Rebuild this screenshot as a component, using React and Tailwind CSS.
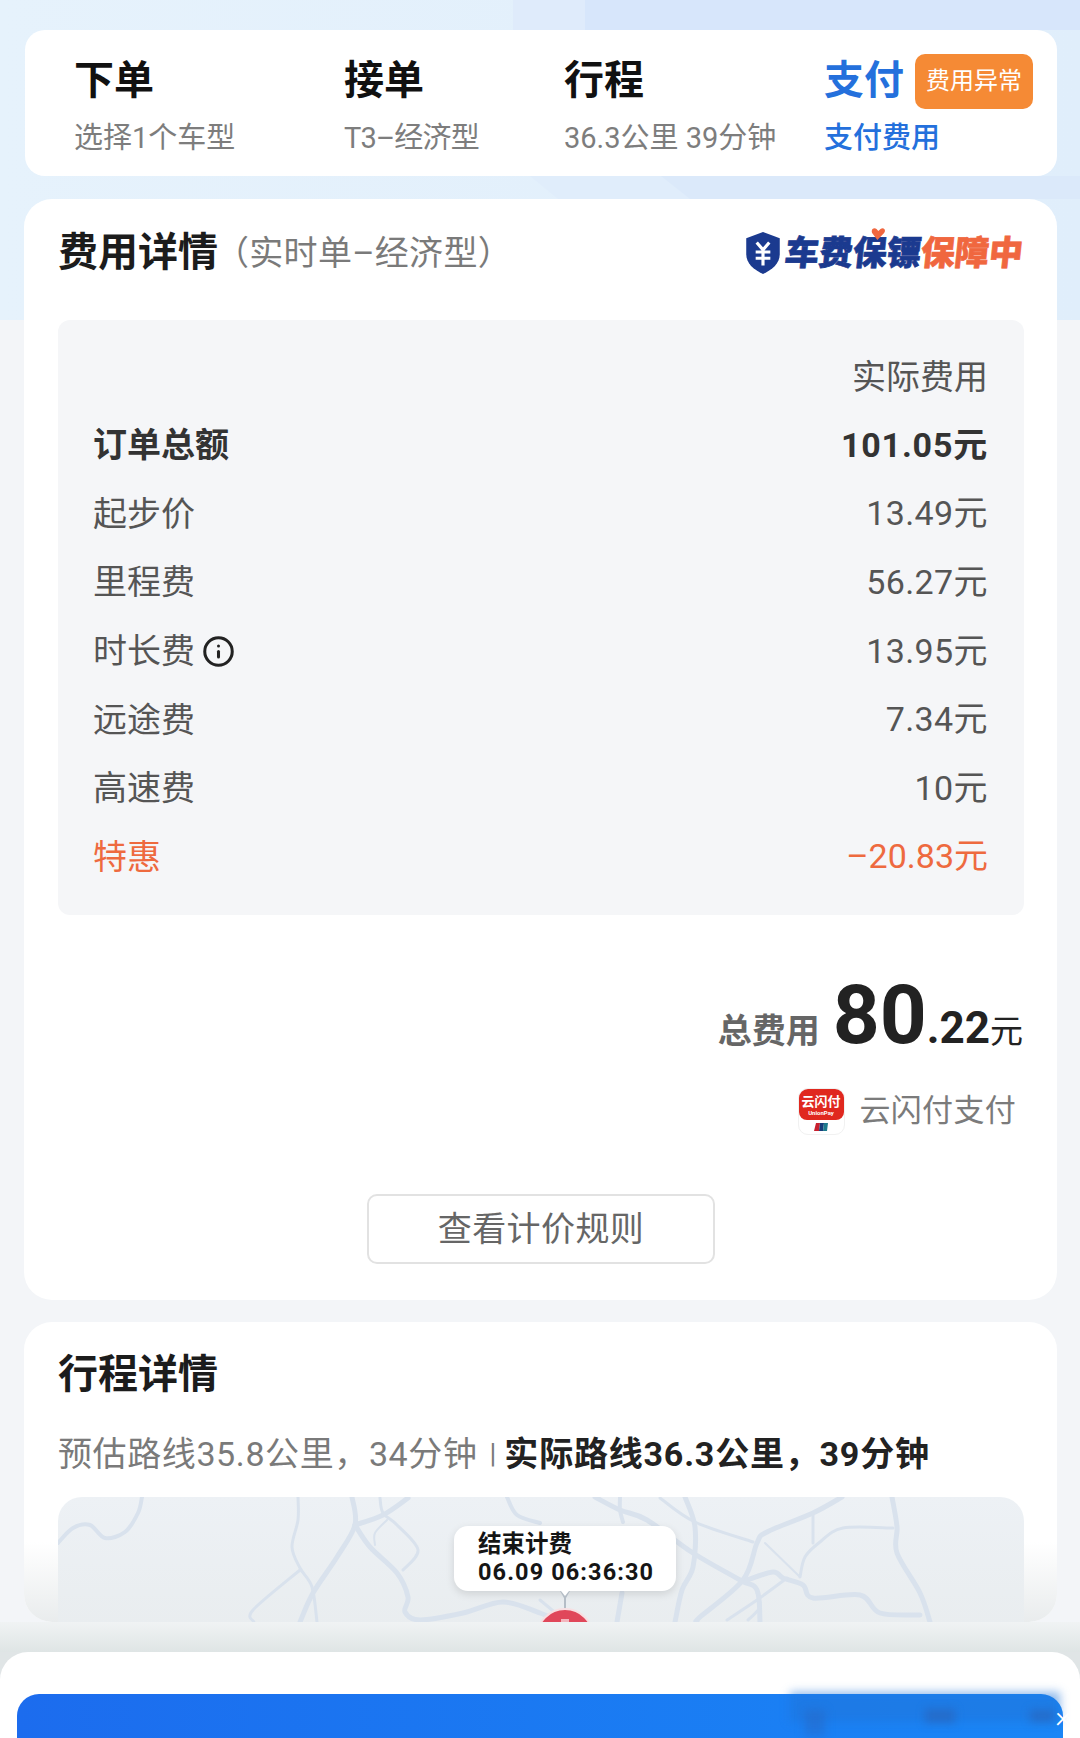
import { Info } from 'lucide-react';

const steps = [
  { title: '下单', sub: '选择1个车型', width: 'w-[270px]' },
  { title: '接单', sub: 'T3–经济型', width: 'w-[220px]', tight: true },
  { title: '行程', sub: '36.3公里 39分钟', width: 'w-[260px]' },
];

const fees = [
  { label: '起步价', value: '13.49元' },
  { label: '里程费', value: '56.27元' },
  { label: '时长费', value: '13.95元', info: true },
  { label: '远途费', value: '7.34元' },
  { label: '高速费', value: '10元' },
];

// road polylines, in map coordinates
const roads = [
  { w: 4, p: [[84, 0], [80, 16], [67, 35], [47, 41], [32, 28], [15, 31], [0, 46]] },
  { w: 3, p: [[240, 0], [240, 23], [234, 50], [242, 71], [254, 90], [259, 125]] },
  { w: 3, p: [[242, 73], [195, 113], [196, 125]] },
  { w: 5, p: [[294, 0], [297, 28], [279, 60], [255, 96], [242, 125]] },
  { w: 5, p: [[297, 28], [312, 50], [339, 76], [350, 100], [347, 115], [362, 123], [405, 116], [445, 105], [482, 116], [495, 122]] },
  { w: 5, p: [[297, 28], [325, 18], [350, 1]] },
  { w: 3, p: [[322, 1], [325, 16], [339, 28], [360, 53], [345, 73]] },
  { w: 2, p: [[329, 23], [317, 36], [317, 48]] },
  { w: 4, p: [[449, 0], [459, 18], [482, 26]] },
  { w: 5, p: [[537, 0], [562, 13], [589, 23], [635, 56], [682, 83], [699, 93], [702, 125]] },
  { w: 4, p: [[562, 0], [562, 13], [565, 25]] },
  { w: 3, p: [[602, 1], [637, 25], [695, 45]] },
  { w: 5, p: [[627, 0], [637, 30], [635, 70], [624, 93], [617, 125]] },
  { w: 5, p: [[784, 0], [755, 16], [709, 35], [699, 46], [685, 83], [642, 120], [639, 125]] },
  { w: 2, p: [[707, 46], [742, 80]] },
  { w: 3, p: [[755, 16], [755, 46]] },
  { w: 5, p: [[834, 0], [839, 30], [839, 56], [862, 96], [872, 125]] },
  { w: 3, p: [[835, 31], [785, 31], [762, 45], [747, 60], [742, 80]] },
  { w: 5, p: [[689, 83], [715, 75], [725, 81], [745, 88], [755, 101], [802, 98], [822, 116], [862, 118]] },
  { w: 3, p: [[729, 81], [699, 103], [669, 123]] },
  { w: 3, p: [[699, 96], [702, 110], [690, 123]] },
  { w: 5, p: [[564, 96], [559, 125]] },
  { w: 3, p: [[482, 103], [500, 118]] },
];

// smooth a polyline with catmull-rom segments
function smooth(p) {
  let d = `M${p[0][0]} ${p[0][1]}`;
  for (let i = 0; i < p.length - 1; i++) {
    const a = p[i - 1] || p[i];
    const b = p[i];
    const c = p[i + 1];
    const e = p[i + 2] || c;
    d += ` C${b[0] + (c[0] - a[0]) / 6} ${b[1] + (c[1] - a[1]) / 6} ${c[0] - (e[0] - b[0]) / 6} ${c[1] - (e[1] - b[1]) / 6} ${c[0]} ${c[1]}`;
  }
  return d;
}

function Logo() {
  return (
    <div className="flex items-center">
      <svg width="38" height="44" viewBox="0 0 36 42" className="mr-[3px]">
        <path d="M18 1 L34 7 V22 C34 31 27 37 18 41 C9 37 2 31 2 22 V7 Z" fill="#1b3a8f" />
        <path d="M12 11 L18 18 L24 11 M11 20 H25 M11 26 H25 M18 18 V33" fill="none" stroke="#fff" strokeWidth="3" />
      </svg>
      <div className="relative flex items-center text-[34px] leading-none font-black skew-x-[-6deg] [-webkit-text-stroke:0.7px_currentColor]">
        <span className="text-[#1b3a8f]">车费保镖</span>
        <span className="text-[#f0673f]">保障中</span>
        <svg width="14" height="12" viewBox="0 0 14 12" className="absolute left-[84px] top-[-8px]">
          <path d="M7 12 L1 5 C-1 2 2 -1 5 1 L7 3 L9 1 C12 -1 15 2 13 5 Z" fill="#f0673f" />
        </svg>
      </div>
    </div>
  );
}

function PayIcon() {
  return (
    <div className="w-[47px] h-[47px] rounded-[10px] bg-white border border-[#f1f1f1] overflow-hidden flex flex-col items-center">
      <div className="w-full h-[31px] bg-[#e0281f] rounded-b-[8px] flex flex-col items-center justify-center text-white">
        <span className="text-[13px] leading-[15px] font-bold">云闪付</span>
        <span className="text-[6px] leading-[7px] font-bold">UnionPay</span>
      </div>
      <svg width="14" height="8" viewBox="0 0 14 8" className="mt-[3px]">
        <path d="M2 0 H6 L5 8 H0 Z" fill="#c8202f" />
        <path d="M6 0 H10 L9 8 H5 Z" fill="#173d7a" />
        <path d="M10 0 H14 L13 8 H9 Z" fill="#1d7a8c" />
      </svg>
    </div>
  );
}

function StepsCard() {
  return (
    <div className="mx-[25px] w-[1032px] h-[146px] bg-white rounded-[20px] pl-[49px] pr-[24px] pt-[23px] flex">
      {steps.map((s) => (
        <div key={s.title} className={s.width}>
          <div className="text-[40px] leading-[56px] font-bold text-[#111]">{s.title}</div>
          <div className={s.tight ? 'text-[29px] leading-[36px] mt-[11px] tracking-[-0.8px] text-[#7d7d7d]' : 'text-[29px] leading-[36px] mt-[11px] text-[#7d7d7d]'}>{s.sub}</div>
        </div>
      ))}
      <div className="flex-1">
        <div className="flex items-center h-[56px]">
          <span className="text-[40px] leading-[56px] font-bold text-[#2470dc]">支付</span>
          <span className="ml-[11px] w-[118px] h-[55px] rounded-[10px] bg-[#f58a35] text-white text-[24px] flex items-center justify-center">费用异常</span>
        </div>
        <div className="text-[29px] leading-[36px] mt-[11px] font-medium text-[#2470dc]">支付费用</div>
      </div>
    </div>
  );
}

function FeeCard() {
  return (
    <div className="mt-[23px] mx-[24px] w-[1033px] h-[1101px] bg-white rounded-[28px] px-[34px] pt-[29px]">
      <div className="h-[50px] flex items-center justify-between">
        <div className="flex items-center">
          <span className="text-[40px] font-bold text-[#1c1c1c]">费用详情</span>
          <span className="ml-[-3px] text-[34px] tracking-[0.3px] text-[#7a7a7a]">（实时单–经济型）</span>
        </div>
        <Logo />
      </div>

      <div className="mt-[42px] w-[966px] h-[595px] bg-[#f5f6f8] rounded-[12px] pl-[35px] pr-[36px] pt-[23px]">
        <div className="h-[68px] flex items-center justify-end text-[34px] text-[#555]">实际费用</div>
        <div className="h-[68.6px] flex items-center justify-between text-[34px] font-bold text-[#333]">
          <span className="pt-[1px]">订单总额</span>
          <span className="tracking-[0.8px]">101.05元</span>
        </div>
        {fees.map((f) => (
          <div key={f.label} className="h-[68.6px] flex items-center justify-between text-[34px] text-[#555]">
            <span className="flex items-center pt-[1px]">
              {f.label}
              {f.info && <Info size={33} strokeWidth={2.2} className="ml-[7px] text-[#222]" />}
            </span>
            <span className="tracking-[0.4px]">{f.value}</span>
          </div>
        ))}
        <div className="h-[68.6px] flex items-center justify-between text-[34px] text-[#ee6a3f]">
          <span className="pt-[1px]">特惠</span>
          <span>–20.83元</span>
        </div>
      </div>

      <div className="mt-[50px] h-[100px] flex items-baseline justify-end text-[#222]">
        <span className="text-[34px] font-bold text-[#666] mr-[13px]">总费用</span>
        <span className="text-[82px] leading-[100px] font-bold">80</span>
        <span className="text-[44px] font-bold">.22</span>
        <span className="text-[33px]">元</span>
      </div>

      <div className="mt-[23px] flex items-center justify-end pr-[7px]">
        <PayIcon />
        <span className="ml-[15px] text-[31px] tracking-[0.3px] text-[#7b7b7b]">云闪付支付</span>
      </div>

      <div className="mt-[59px] ml-[309px] w-[348px] h-[70px] border-2 border-[#e2e2e2] rounded-[10px] flex items-center justify-center text-[34px] tracking-[0.4px] text-[#666]">
        查看计价规则
      </div>
    </div>
  );
}

function TripCard() {
  return (
    <div className="relative mt-[22px] mx-[24px] w-[1033px] h-[300px] bg-white rounded-[28px] px-[34px] pt-[28px] overflow-hidden">
      <div className="absolute inset-x-0 bottom-0 h-[80px] bg-gradient-to-b from-transparent to-[#e9eced]" />
      <div className="relative h-[50px] flex items-center text-[40px] font-bold text-[#1c1c1c]">行程详情</div>
      <div className="relative mt-[32px] h-[44px] flex items-center text-[34px] text-[#7a7a7a] whitespace-nowrap">
        <span className="tracking-[0.6px]">预估路线35.8公里，34分钟</span>
        <span className="ml-[12px] text-[28px]">|</span>
        <span className="ml-[8px] font-bold tracking-[0.8px] text-[#222]">实际路线36.3公里，39分钟</span>
      </div>
      <div className="relative mt-[21px] w-[966px] h-[160px] bg-gradient-to-b from-[#edf1f5] to-[#e8ecee] rounded-t-[24px] overflow-hidden">
        <svg width="966" height="125" viewBox="0 0 966 125" fill="none">
          {roads.map((r, i) => (
            <path key={i} d={smooth(r.p)} stroke="#d9e2ed" strokeWidth={r.w} strokeLinejoin="round" strokeLinecap="round" />
          ))}
        </svg>
        <div className="absolute left-[396px] top-[29px] w-[222px] h-[65px] bg-white rounded-[14px] shadow-[0_3px_8px_rgba(0,0,0,0.12)] pl-[24px] pt-[4px] text-[23.5px] leading-[28px] font-bold text-[#151515]">
          <div>结束计费</div>
          <div className="tracking-[1.1px]">06.09 06:36:30</div>
        </div>
        <svg width="14" height="18" viewBox="0 0 14 18" className="absolute left-[500px] top-[94px]">
          <path d="M2 0 H12 L8 7 V18 H6 V7 Z" fill="#b4bdc6" />
          <path d="M3 0 H11 L7 5 Z" fill="#fff" />
        </svg>
        <div className="absolute left-[478px] top-[111px] w-[58px] h-[58px] rounded-full bg-[#e0475a] border-2 border-[#f8dfe2]" />
        <div className="absolute left-[503px] top-[122px] w-[8px] h-[3px] bg-white/60" />
      </div>
    </div>
  );
}

function BottomSheet() {
  return (
    <div className="bg-[#e0e5e6]">
      <div className="relative h-[86px] bg-white rounded-t-[28px] px-[17px] pt-[42px] overflow-hidden">
        <div className="h-[44px] rounded-t-[22px] bg-gradient-to-r from-[#1c6cee] to-[#1a86f6]" />
        <div className="absolute left-[790px] top-[40px] w-[270px] h-[30px] bg-[#1f74d8]/50 blur-[5px]" />
        <div className="absolute left-[805px] top-[58px] w-[20px] h-[26px] bg-[#2a62b8]/40 blur-[5px]" />
        <div className="absolute left-[925px] top-[57px] w-[30px] h-[14px] bg-[#2a62b8]/60 blur-[4px]" />
        <div className="absolute left-[1030px] top-[58px] w-[24px] h-[12px] bg-[#2a62b8]/60 blur-[4px]" />
        <span className="absolute right-[9px] top-[50px] text-[30px] leading-[30px] font-light text-white">×</span>
      </div>
    </div>
  );
}

export default function App() {
  return (
    <div className="relative w-[1080px] h-[1738px] overflow-hidden bg-[#f3f5f8] font-['Roboto','Noto_Sans_CJK_SC',sans-serif]">
      <svg width="1080" height="320" viewBox="0 0 1080 320" className="absolute left-0 top-0">
        <defs>
          <linearGradient id="bgTop" x1="0" y1="0" x2="1" y2="0">
            <stop offset="0" stopColor="#e6f2fc" />
            <stop offset="1" stopColor="#e0eefb" />
          </linearGradient>
        </defs>
        <rect width="1080" height="320" fill="url(#bgTop)" />
        <path d="M513 0 H1080 V30 H513 Z" fill="#dfebfb" />
        <path d="M585 0 H1080 V30 H585 Z" fill="#d7e6fb" />
        <path d="M530 176 H1080 V199 H558 Z" fill="#e0edfb" />
        <path d="M661 176 H1080 V199 H690 Z" fill="#dbe9fa" />
      </svg>

      <div className="relative h-[1622px] pt-[30px]">
        <StepsCard />
        <FeeCard />
        <TripCard />
      </div>
      <div className="relative h-[30px] bg-gradient-to-b from-[#f0f3f4] to-[#dfe5e5]" />
      <BottomSheet />
    </div>
  );
}
